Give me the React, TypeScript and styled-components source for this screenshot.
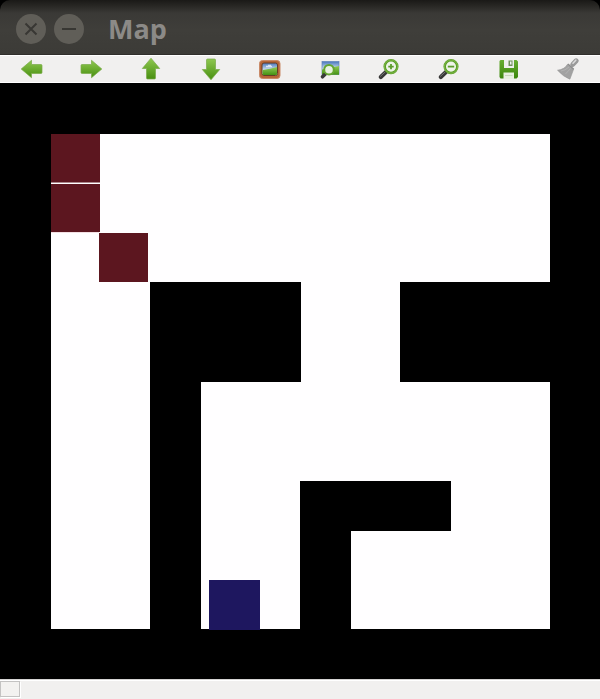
import React from "react";
import styled, { createGlobalStyle } from "styled-components";

const GlobalStyle = createGlobalStyle`
  * { box-sizing: border-box; }
  body { margin: 0; background: #000; }
`;

const Window = styled.div`
  display: flex;
  flex-direction: column;
  min-height: 100vh;
  background: #000;
  font-family: "Open Sans", "Noto Sans", sans-serif;
`;

const TitleBar = styled.header`
  display: flex;
  align-items: center;
  gap: 8px;
  height: 55px;
  padding: 4px 16px 0;
  border-radius: 10px 10px 0 0;
  border-bottom: 1px solid #302e2b;
  background: linear-gradient(#1a1917 0, #262522 5px, #3a3936 13px, #3f3e3a 30px, #3c3b37 100%);
`;

const WindowButton = styled.button`
  width: 30px;
  height: 30px;
  padding: 0;
  border: 0;
  border-radius: 50%;
  background: #605e58;
  color: #383733;

  svg { display: block; }
`;

const Title = styled.h1`
  margin: 0 0 0 16px;
  font-size: 27px;
  line-height: 36px;
  font-weight: 700;
  color: #8c8a87;
`;

const Toolbar = styled.nav`
  display: grid;
  grid-template-columns: repeat(10, 1fr);
  height: 28px;
  padding: 0 2px;
  border-top: 1px solid #fff;
  border-bottom: 1px solid #fff;
  background: #f1f0ef;
`;

const ToolButton = styled.button`
  display: flex;
  align-items: center;
  justify-content: center;
  padding: 0;
  border: 0;
  background: none;
`;

const MapView = styled.svg`
  display: block;
  width: 100%;
  height: auto;
`;

const StatusBar = styled.footer`
  display: flex;
  flex: 1;
  min-height: 20px;
  padding-top: 1px;
  border-top: 1px solid #d5d4d3;
  background: #f1f0ef;
  box-shadow: inset 0 1px #fff;
`;

const StatusCell = styled.div`
  width: 20px;
  height: 16px;
  border: 1px solid #c4c3c2;
  background: #f3f2f0;
  box-shadow: 1px 1px #fff;
`;

const Arrow = ({ turn }: { turn: number }) => (
  <g transform={`rotate(${turn} 12 12)`}>
    <path d="M1.2 12 11.5 3.3v4.2H21q1 0 1 1v7q0 1-1 1h-9.5v4.2Z" fill={`url(#arrow${turn})`} stroke="#79ab48" strokeWidth=".7" strokeLinejoin="round" />
  </g>
);

const Lens = ({ sign }: { sign: string }) => (
  <>
    <path d="m9 15-5.2 5" stroke="#383838" strokeWidth="4.2" strokeLinecap="round" />
    <path d="m8 15.2-4.5 4" stroke="#777" strokeWidth="1" strokeLinecap="round" />
    <circle cx="14" cy="9.6" r="6.3" fill="#eef3e9" stroke="#5a9e26" strokeWidth="2.5" />
    <circle cx="14" cy="9.6" r="6.6" fill="none" stroke="#87bd50" strokeWidth=".8" />
    <path d={sign} stroke="#5c9c2c" strokeWidth="1.8" />
  </>
);

const tools: { label: string; icon: React.ReactNode }[] = [
  { label: "Pan left", icon: <Arrow turn={0} /> },
  { label: "Pan right", icon: <Arrow turn={180} /> },
  { label: "Pan up", icon: <Arrow turn={90} /> },
  { label: "Pan down", icon: <Arrow turn={270} /> },
  {
    label: "Original size",
    icon: (
      <>
        <rect x="1.5" y="3.5" width="20.5" height="18" rx="3" fill="#b76537" stroke="#c98a68" />
        <rect x="4" y="6" width="15.5" height="12.5" rx="2" fill="url(#sky)" stroke="#653d25" />
        <path d="M4.5 13q8-1 14.5-3v7q0 1-1 1H5.5q-1 0-1-1Z" fill="url(#grass)" />
        <path d="M8 9.5h6m-4-1h3" stroke="#fff" strokeWidth="1.5" opacity=".7" />
      </>
    ),
  },
  {
    label: "Zoom to fit",
    icon: (
      <>
        <rect x="4" y="4.5" width="17" height="13" fill="url(#sky)" stroke="#6083bd" strokeWidth=".7" />
        <path d="M4 12.5 21 9v8.7H4Z" fill="url(#grass)" />
        <path d="m7.8 16.5-3.3 3.3" stroke="#3a3a3a" strokeWidth="3.6" strokeLinecap="round" />
        <circle cx="11" cy="12.7" r="4.8" fill="#e8f2e1" stroke="#65a631" strokeWidth="2" />
      </>
    ),
  },
  { label: "Zoom in", icon: <Lens sign="M11.3 9.6h5.4M14 6.9v5.4" /> },
  { label: "Zoom out", icon: <Lens sign="M10.8 9.6h6.4" /> },
  {
    label: "Save",
    icon: (
      <>
        <path d="M3.5 3H7v8h10V3h2.5L21 4.5V20l-1.5 1.5h-16L2.5 20V4Z" fill="url(#save)" />
        <path d="M7 3h10v7.5H7Z" fill="#eeefec" />
        <path d="M11.5 3.5h4v5.5h-4Z" fill="#6f8f5c" />
        <path d="M13 4.5h1.5v3H13Z" fill="#f2f4f0" />
        <path d="M6.5 15.5H17v6.5H6.5Z" fill="#e7efdf" />
        <path d="M8 18.5h7.5" stroke="#c7d5bb" />
      </>
    ),
  },
  {
    label: "Clear",
    icon: (
      <>
        <path d="m16.8 7.4 3.4-3.6" stroke="#9a9a9a" strokeWidth="5" strokeLinecap="round" />
        <path d="m17 6.2 2.8-3" stroke="#dadada" strokeWidth="1.6" strokeLinecap="round" />
        <path d="M11.5 7.3 17.5 12.5l-3.6 9.7Q7 19.5 1.5 13.2Q8.5 12.5 11.5 7.3Z" fill="#a2a2a2" stroke="#979797" strokeWidth=".6" />
        <path d="M13 10Q9 13.6 5 14M14.5 11.5 9.5 17" fill="none" stroke="#b5b5b5" strokeWidth=".8" />
        <path d="m12 7 5.8 5.2" stroke="#8a8a8a" strokeWidth="1.2" />
      </>
    ),
  },
];

const gradientEnds: Record<number, [number, number, number, number]> = {
  0: [0, 0, 0, 1],
  180: [0, 1, 0, 0],
  90: [0, 0, 1, 0],
  270: [1, 0, 0, 0],
};

const Gradients = () => (
  <defs>
    {Object.entries(gradientEnds).map(([turn, [x1, y1, x2, y2]]) => (
      <linearGradient key={turn} id={`arrow${turn}`} x1={x1} y1={y1} x2={x2} y2={y2}>
        <stop stopColor="#8fc850" />
        <stop offset="1" stopColor="#488f10" />
      </linearGradient>
    ))}
    <linearGradient id="sky" x2="0" y2="1">
      <stop stopColor="#4876bc" />
      <stop offset=".6" stopColor="#dceaf5" />
    </linearGradient>
    <linearGradient id="grass" x2="0" y2="1">
      <stop stopColor="#91ca55" />
      <stop offset="1" stopColor="#459114" />
    </linearGradient>
    <linearGradient id="save" x2="0" y2="1">
      <stop stopColor="#68ad31" />
      <stop offset="1" stopColor="#3b850c" />
    </linearGradient>
  </defs>
);

export default function App() {
  return (
    <Window>
      <GlobalStyle />
      <TitleBar>
        <WindowButton aria-label="Close">
          <svg width="30" height="30" viewBox="0 0 30 30" stroke="currentColor" strokeWidth="2">
            <path d="m9.5 9.5 11 11M20.5 9.5l-11 11" />
          </svg>
        </WindowButton>
        <WindowButton aria-label="Minimize">
          <svg width="30" height="30" viewBox="0 0 30 30" stroke="currentColor" strokeWidth="2">
            <path d="M8 15h14" />
          </svg>
        </WindowButton>
        <Title>Map</Title>
      </TitleBar>
      <Toolbar aria-label="View tools">
        {tools.map(({ label, icon }, i) => (
          <ToolButton key={label} aria-label={label}>
            <svg width="24" height="24" viewBox="0 0 24 24" fill="none">
              {i === 0 && <Gradients />}
              {icon}
            </svg>
          </ToolButton>
        ))}
      </Toolbar>
      <MapView viewBox="0 0 600 596" role="img" aria-label="Occupancy map">
        <rect width="600" height="596" fill="#000" />
        <path
          fill="#fffeff"
          d="M51 51H550V199H400V299H550V546H351V448H451V398H300V546H201V299H301V199H150V546H51Z"
        />
        <g fill="#5c161f">
          <rect x="51" y="51" width="49" height="48" />
          <rect x="51" y="101" width="49" height="48" />
          <rect x="99" y="150" width="49" height="49" />
        </g>
        <path d="M51 99.5H100" stroke="#a9868b" />
        <path d="M51 149.5H99" stroke="#f3dfe3" />
        <rect x="209" y="497" width="51" height="50" fill="#1e175f" />
      </MapView>
      <StatusBar>
        <StatusCell />
      </StatusBar>
    </Window>
  );
}
